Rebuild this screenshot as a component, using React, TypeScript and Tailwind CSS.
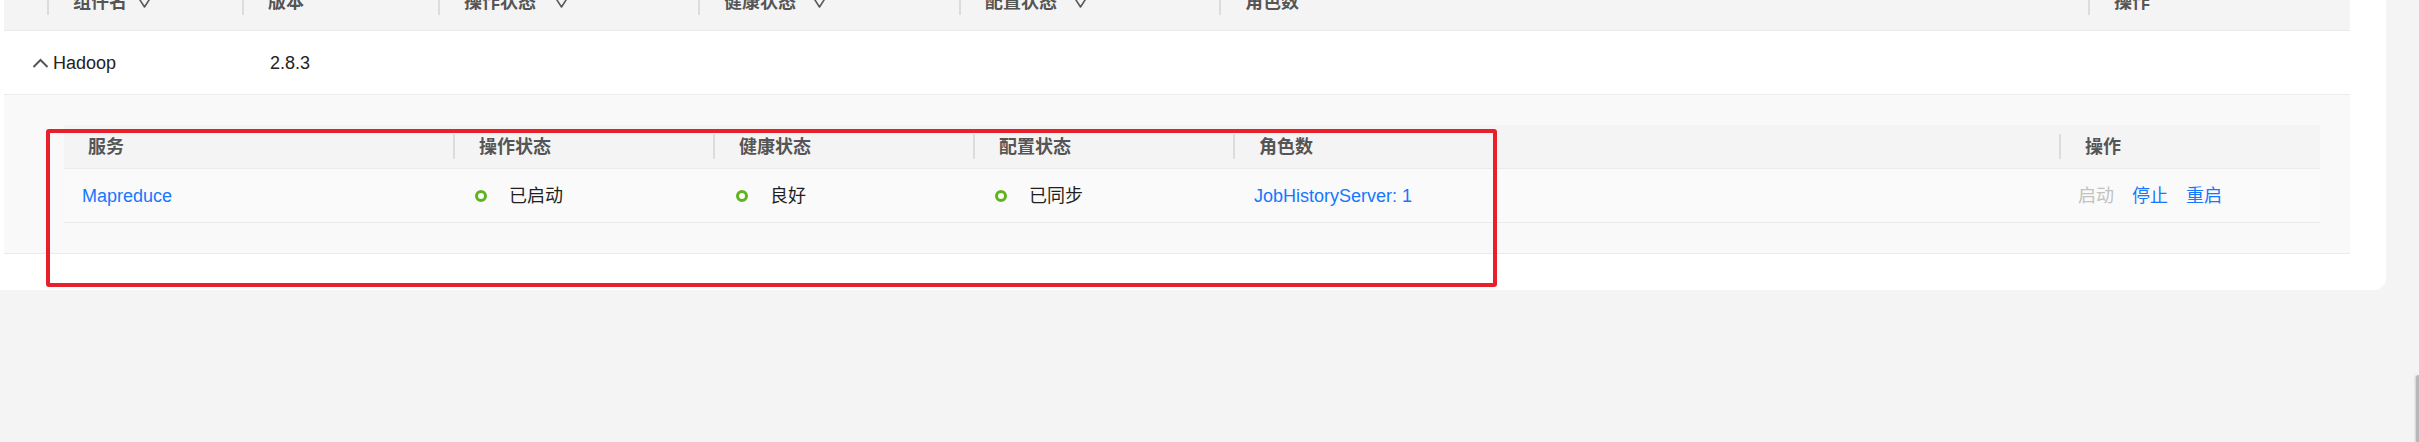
// App.tsx
import type { ReactNode } from "react";

function SortIcon() {
    return (
        <svg width="13" height="11" viewBox="0 0 13 11" className="shrink-0">
            <path d="M1 1.5 H12 L6.5 10 Z" fill="none" stroke="#5a5a5a" strokeWidth="1.6" strokeLinejoin="round" />
        </svg>
    );
}

function ChevronUp() {
    return (
        <svg width="17" height="10" viewBox="0 0 17 10" className="shrink-0">
            <polyline points="1.5,9 8.5,2 15.5,9" fill="none" stroke="#555" strokeWidth="2" />
        </svg>
    );
}

function Sep() {
    return <span className="w-[2px] h-[25px] bg-[#dcdcdc] shrink-0" />;
}

function HeadText({ children, sort, gap = "ml-[17px]" }: { children: ReactNode; sort?: boolean; gap?: string }) {
    return (
        <span className="ml-[24px] flex items-center font-bold text-[#555]">
            {children}
            {sort ? <span className={gap}><SortIcon /></span> : null}
        </span>
    );
}

function Status({ label }: { label: string }) {
    return (
        <div className="flex items-center">
            <span className="w-[12px] h-[12px] rounded-full border-[3px] border-[#5fb41e] shrink-0" />
            <span className="ml-[22px] text-[#1f1f1f]">{label}</span>
        </div>
    );
}

export default function App() {
    return (
        <div className="relative w-full min-h-[442px] bg-[#f4f4f4] overflow-hidden font-['Liberation_Sans','Noto_Sans_CJK_SC',sans-serif] text-[18px] leading-none">
            {/* white card, top is scrolled off */}
            <div className="flex flex-col w-[2386px] bg-white rounded-br-[12px] pl-[4px] pb-[36px]">
                <div className="w-[2346px] flex flex-col">
                    {/* outer header (half cut by viewport) */}
                    <div className="-mt-[26px] h-[57px] flex bg-[#f4f4f4] border-b border-[#ebebeb]">
                        <div className="w-[43px]" />
                        <div className="w-[195px] flex items-center">
                            <Sep />
                            <HeadText sort gap="ml-[11px]">组件名</HeadText>
                        </div>
                        <div className="w-[196px] flex items-center">
                            <Sep />
                            <HeadText>版本</HeadText>
                        </div>
                        <div className="w-[260px] flex items-center">
                            <Sep />
                            <HeadText sort gap="ml-[19px]">操作状态</HeadText>
                        </div>
                        <div className="w-[261px] flex items-center">
                            <Sep />
                            <HeadText sort>健康状态</HeadText>
                        </div>
                        <div className="w-[260px] flex items-center">
                            <Sep />
                            <HeadText sort>配置状态</HeadText>
                        </div>
                        <div className="w-[869px] flex items-center">
                            <Sep />
                            <HeadText>角色数</HeadText>
                        </div>
                        <div className="w-[262px] flex items-center">
                            <Sep />
                            <HeadText>操作</HeadText>
                        </div>
                    </div>

                    {/* Hadoop row */}
                    <div className="h-[64px] flex items-center border-b border-[#ececec] text-[#222]">
                        <div className="w-[238px] pl-[28px] flex items-center">
                            <ChevronUp />
                            <span className="ml-[4px]">Hadoop</span>
                        </div>
                        <div className="w-[196px] pl-[28px]">2.8.3</div>
                    </div>

                    {/* expanded services */}
                    <div className="h-[159px] bg-[#f9f9f9] border-b border-[#ebebeb] pt-[30px] pl-[60px] pr-[30px]">
                        <div className="h-[44px] flex bg-[#f4f4f4] border-b border-[#ebebeb]">
                            <div className="w-[389px] flex items-center pl-[24px] font-bold text-[#555]">服务</div>
                            <div className="w-[260px] flex items-center">
                                <Sep />
                                <HeadText>操作状态</HeadText>
                            </div>
                            <div className="w-[260px] flex items-center">
                                <Sep />
                                <HeadText>健康状态</HeadText>
                            </div>
                            <div className="w-[260px] flex items-center">
                                <Sep />
                                <HeadText>配置状态</HeadText>
                            </div>
                            <div className="w-[826px] flex items-center">
                                <Sep />
                                <HeadText>角色数</HeadText>
                            </div>
                            <div className="w-[261px] flex items-center">
                                <Sep />
                                <HeadText>操作</HeadText>
                            </div>
                        </div>
                        <div className="h-[54px] flex items-center bg-[#fafafa] border-b border-[#ebebeb]">
                            <div className="w-[389px] pl-[18px] text-[#1677ff]">Mapreduce</div>
                            <div className="w-[260px] pl-[22px]"><Status label="已启动" /></div>
                            <div className="w-[260px] pl-[23px]"><Status label="良好" /></div>
                            <div className="w-[260px] pl-[22px]"><Status label="已同步" /></div>
                            <div className="w-[826px] pl-[21px] text-[#1677ff]">JobHistoryServer: 1</div>
                            <div className="w-[261px] pl-[19px] flex gap-[18px]">
                                <span className="text-[#c2c2c2]">启动</span>
                                <span className="text-[#1677ff]">停止</span>
                                <span className="text-[#1677ff]">重启</span>
                            </div>
                        </div>
                    </div>
                </div>
            </div>

            {/* red annotation box */}
            <div className="absolute left-[46px] top-[129px] w-[1451px] h-[158px] border-4 border-[#e8202a] rounded-[3px]" />

            {/* scrollbar sliver */}
            <div className="absolute right-0 top-[375px] w-[3px] h-[67px] bg-[#b8b8b8] rounded-tl-[3px] shadow-[-1px_0_2px_rgba(0,0,0,0.15)]" />
        </div>
    );
}
